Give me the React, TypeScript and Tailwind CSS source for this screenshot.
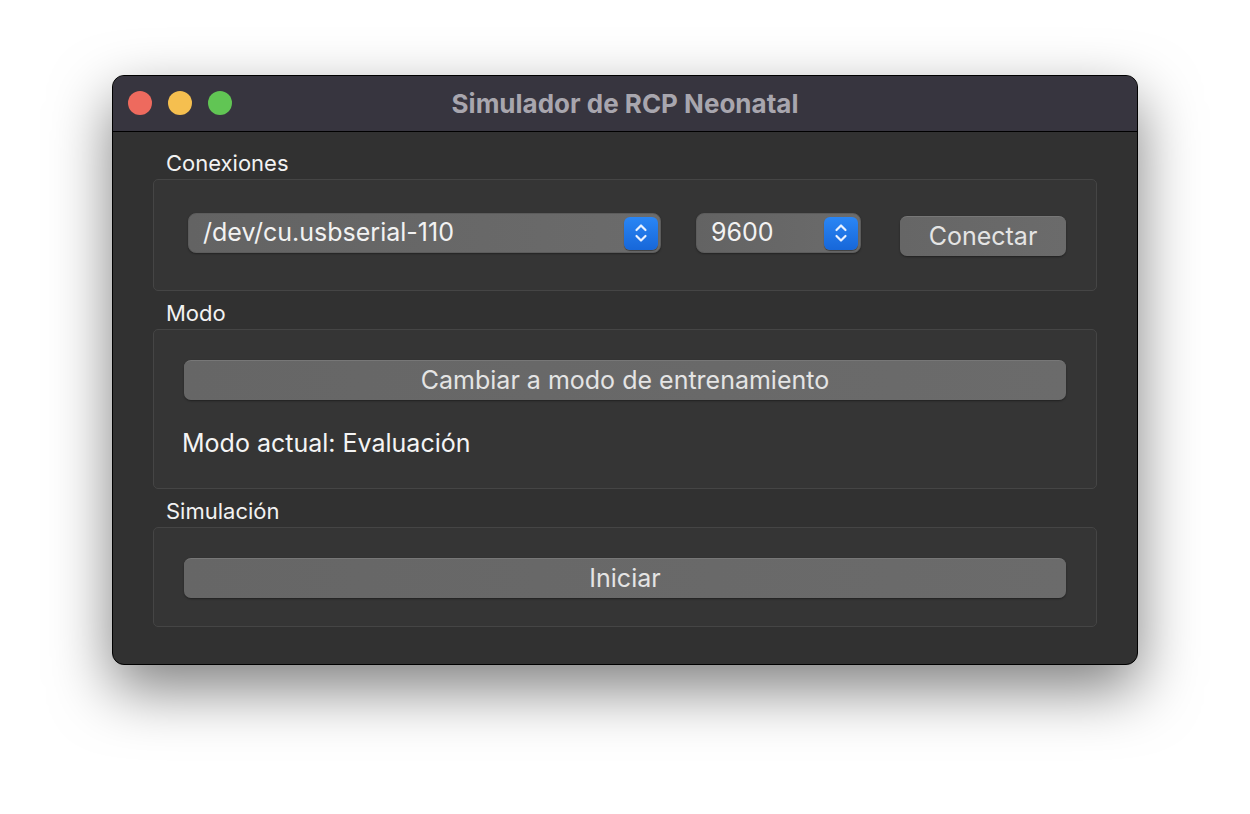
import React from "react";

const font = { fontFamily: "Inter, 'Noto Sans', 'Liberation Sans', sans-serif" };

const Stepper = () => (
  <div className="flex h-[33px] w-[34px] items-center justify-center rounded-[6px] bg-gradient-to-b from-[#2a86f5] to-[#1767d9] shadow-[0_1px_1px_rgba(0,0,0,0.4)]">
    <svg width="16" height="24" viewBox="0 0 16 24" fill="none" stroke="#eaf2ff" strokeWidth="2.2" strokeLinecap="round" strokeLinejoin="round">
      <path d="M3.5 9 L8 4.5 L12.5 9" />
      <path d="M3.5 15 L8 19.5 L12.5 15" />
    </svg>
  </div>
);

const Combo = ({ value, width }: { value: string; width: string }) => (
  <div className={`${width} flex h-10 items-center justify-between rounded-[8px] border border-[#5c5c5c] bg-gradient-to-r from-[#636363] to-[#6b6b6b] pl-[14px] pr-[2px] shadow-[0_1px_2px_rgba(0,0,0,0.35)]`}>
    <span className="text-[25px] text-[#f2f2f2]">{value}</span>
    <Stepper />
  </div>
);

const Button = ({ label, className }: { label: string; className?: string }) => (
  <button className={`flex h-10 items-center justify-center rounded-[7px] border-t border-[#777] bg-gradient-to-r from-[#666] to-[#6b6b6b] text-[25px] text-[#e4e4e4] shadow-[0_1px_2px_rgba(0,0,0,0.4)] ${className ?? ""}`}>
    {label}
  </button>
);

const Group = ({ title, children, className }: { title: string; children: React.ReactNode; className?: string }) => (
  <div>
    <div className="h-8 pl-[13px] text-[22px] leading-8 text-[#f2f2f2]">{title}</div>
    <div className={`rounded-[5px] border border-[#454545] bg-[#353535] ${className ?? ""}`}>{children}</div>
  </div>
);

export default function App() {
  return (
    <div className="min-h-screen bg-white pt-[75px]" style={font}>
      <div className="mx-auto w-[1026px] overflow-hidden rounded-[12px] border border-black bg-[#313131] shadow-[0_24px_60px_rgba(0,0,0,0.5)]">
        <div className="relative flex h-[56px] items-center justify-center border-b border-black bg-[#37353f]">
          <div className="absolute left-[15px] top-[15px] flex gap-4">
            <div className="h-6 w-6 rounded-full bg-[#ee6a5e]" />
            <div className="h-6 w-6 rounded-full bg-[#f5bf4f]" />
            <div className="h-6 w-6 rounded-full bg-[#61c554]" />
          </div>
          <span className="text-[26px] font-bold text-[#a8a6ae]">Simulador de RCP Neonatal</span>
        </div>
        <div className="flex flex-col gap-[6px] px-10 pb-[37px] pt-[15px]">
          <Group title="Conexiones" className="flex h-[112px] items-start pl-[34px] pt-[33px]">
            <Combo value="/dev/cu.usbserial-110" width="w-[473px]" />
            <div className="w-[35px]" />
            <Combo value="9600" width="w-[165px]" />
            <div className="w-[39px]" />
            <Button label="Conectar" className="mt-[3px] w-[166px]" />
          </Group>
          <Group title="Modo" className="flex h-[160px] flex-col px-[30px] pt-[30px]">
            <Button label="Cambiar a modo de entrenamiento" className="w-full" />
            <div className="ml-[-2px] mt-[25px] text-[25px] text-[#f4f4f4]">Modo actual: Evaluación</div>
          </Group>
          <Group title="Simulación" className="flex h-[100px] flex-col px-[30px] pt-[30px]">
            <Button label="Iniciar" className="w-full" />
          </Group>
        </div>
      </div>
    </div>
  );
}
